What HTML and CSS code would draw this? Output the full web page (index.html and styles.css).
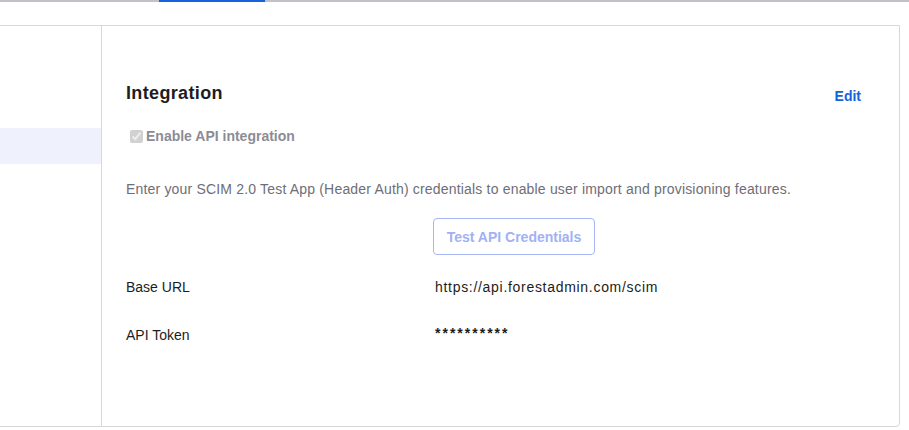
FILE: index.html
```html
<!DOCTYPE html>
<html>
<head>
<meta charset="utf-8">
<link rel="stylesheet" href="styles.css">
</head>
<body>
<div class="tabs">
  <div class="tab-spacer"></div>
  <div class="tab-active"></div>
</div>
<div class="card">
  <aside class="side">
    <div class="side-item"></div>
  </aside>
  <main class="content">
    <div class="head">
      <h2 class="title">Integration</h2>
      <a class="edit">Edit</a>
    </div>
    <label class="check">
      <input type="checkbox" checked disabled>
      <span>Enable API integration</span>
    </label>
    <p class="desc">Enter your SCIM 2.0 Test App (Header Auth) credentials to enable user import and provisioning features.</p>
    <div class="btn-row">
      <button class="btn" disabled>Test API Credentials</button>
    </div>
    <div class="field">
      <div class="label">Base URL</div>
      <div class="value">https://api.forestadmin.com/scim</div>
    </div>
    <div class="field">
      <div class="label">API Token</div>
      <div class="value secret">**********</div>
    </div>
  </main>
</div>
</body>
</html>
```
FILE: styles.css
```css
html, body {
  margin: 0;
  padding: 0;
  background: #ffffff;
  font-family: "Liberation Sans", Arial, sans-serif;
  color: #1d1d21;
}
.tabs {
  display: flex;
  height: 2px;
  background: #c1c1c8;
}
.tab-spacer { width: 159px; }
.tab-active {
  width: 106px;
  background: #1662dd;
}
.card {
  margin-top: 23px;
  margin-left: -1px;
  width: 901px;
  height: 402px;
  border: 1px solid #d7d7dc;
  border-radius: 0 0 4px 0;
  display: flex;
  box-sizing: border-box;
}
.side {
  width: 102px;
  flex: none;
  border-right: 1px solid #d7d7dc;
  box-sizing: border-box;
  padding-top: 102px;
}
.side-item {
  height: 36px;
  background: #eff2fd;
}
.content {
  flex: 1;
  padding: 56px 37px 0 24px;
}
.head {
  display: flex;
  justify-content: space-between;
  align-items: center;
  height: 22px;
}
.title {
  margin: 0;
  font-size: 18px;
  font-weight: 700;
  color: #1d1d21;
  letter-spacing: 0.35px;
}
.edit {
  font-size: 14px;
  font-weight: 700;
  color: #1662dd;
  margin-top: 6px;
  margin-right: 1px;
}
.check {
  display: flex;
  align-items: center;
  margin-top: 24px;
  margin-left: 4px;
  font-size: 14px;
  font-weight: 700;
  color: #8c8c96;
}
.check input {
  margin: 0 3px 0 0;
  width: 13px;
  height: 13px;
}
.desc {
  margin: 37px 0 0 0;
  font-size: 14px;
  color: #6e6e78;
  letter-spacing: 0.18px;
}
.btn-row {
  display: flex;
  padding-left: 307px;
  margin-top: 21px;
}
.btn {
  height: 37px;
  width: 162px;
  border: 1px solid #a7b5f5;
  border-radius: 4px;
  background: #ffffff;
  color: #a2b1f3;
  font-family: "Liberation Sans", Arial, sans-serif;
  font-size: 14px;
  font-weight: 700;
  padding: 0;
}
.field {
  display: flex;
  font-size: 14px;
  color: #1d1d21;
  height: 48px;
  align-items: center;
}
.btn-row + .field { margin-top: 8px; }
.label { width: 309px; }
.value {
  color: #1d1d21;
  letter-spacing: 0.7px;
}
.secret {
  letter-spacing: 2px;
  font-weight: 700;
  margin-top: -4px;
}
```
